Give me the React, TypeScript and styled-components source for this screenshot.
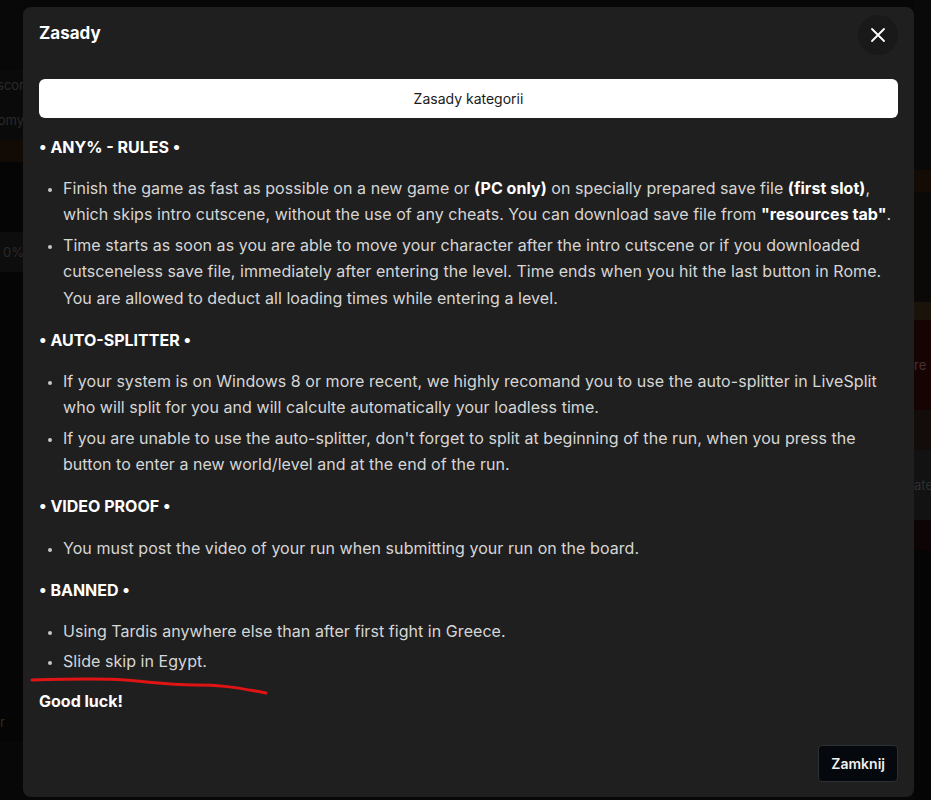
import React from "react";
import styled, { createGlobalStyle } from "styled-components";

const Global = createGlobalStyle`
  html, body { margin: 0; padding: 0; background: #050505; }
  body { font-family: Inter, "Noto Sans", sans-serif; width: 931px; height: 800px; overflow: hidden; }
  * { box-sizing: border-box; }
`;

const Page = styled.div`
  position: relative;
  width: 931px;
  height: 800px;
  display: flex;
  justify-content: space-between;
  background: #070707;
`;

const SideCol = styled.div<{ $w: number }>`
  width: ${(p) => p.$w}px;
  display: flex;
  flex-direction: column;
  overflow: hidden;
`;

const Band = styled.div<{ $h: number; $bg: string; $c?: string; $align?: string }>`
  height: ${(p) => p.$h}px;
  background: ${(p) => p.$bg};
  color: ${(p) => p.$c || "#2a2a2a"};
  font-size: 13px;
  display: flex;
  align-items: center;
  justify-content: ${(p) => p.$align || "flex-end"};
  white-space: nowrap;
  overflow: hidden;
`;

const Overlay = styled.div`
  position: absolute;
  inset: 0;
  padding: 7px 17px 3px 23px;
`;

const Modal = styled.div`
  position: relative;
  height: 790px;
  background: #1f1f1f;
  border-radius: 8px;
  display: flex;
  flex-direction: column;
  color: #d6d6d6;
`;

const Header = styled.div`
  display: flex;
  align-items: center;
  justify-content: space-between;
  padding: 8px 16px 0 16px;
  height: 48px;
`;

const Title = styled.h2`
  margin: 0;
  font-size: 17px;
  font-weight: 700;
  color: #ffffff;
  margin-top: -4px;
`;

const CloseBtn = styled.button`
  width: 40px;
  height: 40px;
  border-radius: 50%;
  border: none;
  background: #191919;
  color: #ffffff;
  display: flex;
  align-items: center;
  justify-content: center;
  padding: 0;
`;

const Body = styled.div`
  flex: 1;
  padding: 24px 16px 0 16px;
  display: flex;
  flex-direction: column;
  gap: 15.5px;
`;

const TabButton = styled.button`
  height: 39px;
  width: 100%;
  background: #ffffff;
  border: none;
  border-radius: 6px;
  font-family: Inter, sans-serif;
  font-size: 14px;
  color: #1a1a1a;
`;

const Heading = styled.p<{ $tight?: boolean }>`
  margin: ${(p) => (p.$tight ? "-2px 0 0" : "0")};
  font-size: 16px;
  line-height: 26px;
  font-weight: 700;
  color: #ffffff;
`;

const List = styled.ul`
  margin: 0;
  padding-left: 24px;
  display: flex;
  flex-direction: column;
  gap: 4px;
`;

const Item = styled.li`
  font-size: 16px;
  line-height: 26.4px;
  letter-spacing: 0.05px;
  color: #d6d6d6;
  &::marker { color: #c8c8c8; font-size: 13px; }
  strong { color: #ffffff; font-weight: 700; }
`;

const Footer = styled.div`
  display: flex;
  justify-content: flex-end;
  padding: 0 16px 15px 16px;
`;

const CloseFooterBtn = styled.button`
  height: 37px;
  padding: 0 12px;
  background: #05080c;
  border: 1px solid #2c2f33;
  border-radius: 4px;
  color: #f0f0f0;
  font-family: Inter, sans-serif;
  font-size: 14px;
  font-weight: 600;
`;

const Scribble = styled.svg`
  position: absolute;
  left: 0;
  top: 0;
  width: 931px;
  height: 800px;
  pointer-events: none;
`;

export default function App() {
  return (
    <>
      <Global />
      <Page>
        <SideCol $w={24}>
          <Band $h={70} $bg="#080808" />
          <Band $h={30} $bg="#0a0a0a">scor</Band>
          <Band $h={40} $bg="#0a0a0a">omy</Band>
          <Band $h={22} $bg="#120b05" />
          <Band $h={70} $bg="#050505" />
          <Band $h={40} $bg="#0d0d0d">0%</Band>
          <Band $h={430} $bg="#050505" />
          <Band $h={40} $bg="#050505" $c="#3a2a0a" $align="flex-start">r</Band>
        </SideCol>
        <SideCol $w={17}>
          <Band $h={170} $bg="#090909" />
          <Band $h={22} $bg="#140c04" />
          <Band $h={110} $bg="#0a0908" />
          <Band $h={18} $bg="#1a130a" />
          <Band $h={90} $bg="#160404" $c="#4a3030" $align="flex-start">re</Band>
          <Band $h={40} $bg="#120d0a" />
          <Band $h={70} $bg="#121212" $c="#2e2e2e" $align="flex-start">ate</Band>
          <Band $h={30} $bg="#0d0505" />
          <Band $h={250} $bg="#050505" />
        </SideCol>
        <Overlay>
          <Modal>
            <Header>
              <Title>Zasady</Title>
              <CloseBtn aria-label="close">
                <svg width="16" height="16" viewBox="0 0 16 16" fill="none" stroke="#fff" strokeWidth="1.8" strokeLinecap="round">
                  <path d="M2 2L14 14M14 2L2 14" />
                </svg>
              </CloseBtn>
            </Header>
            <Body>
              <TabButton>Zasady kategorii</TabButton>
              <Heading>• ANY% - RULES •</Heading>
              <List>
                <Item>
                  Finish the game as fast as possible on a new game or <strong>(PC only)</strong> on specially prepared save file <strong>(first slot)</strong>, which skips intro cutscene, without the use of any cheats. You can download save file from <strong>"resources tab"</strong>.
                </Item>
                <Item>
                  Time starts as soon as you are able to move your character after the intro cutscene or if you downloaded cutsceneless save file, immediately after entering the level. Time ends when you hit the last button in Rome. You are allowed to deduct all loading times while entering a level.
                </Item>
              </List>
              <Heading>• AUTO-SPLITTER •</Heading>
              <List>
                <Item>
                  If your system is on Windows 8 or more recent, we highly recomand you to use the auto-splitter in LiveSplit who will split for you and will calculte automatically your loadless time.
                </Item>
                <Item>
                  If you are unable to use the auto-splitter, don't forget to split at beginning of the run, when you press the button to enter a new world/level and at the end of the run.
                </Item>
              </List>
              <Heading>• VIDEO PROOF •</Heading>
              <List>
                <Item>You must post the video of your run when submitting your run on the board.</Item>
              </List>
              <Heading>• BANNED •</Heading>
              <List>
                <Item>Using Tardis anywhere else than after first fight in Greece.</Item>
                <Item>Slide skip in Egypt.</Item>
              </List>
              <Heading $tight>Good luck!</Heading>
            </Body>
            <Footer>
              <CloseFooterBtn>Zamknij</CloseFooterBtn>
            </Footer>
          </Modal>
        </Overlay>
        <Scribble viewBox="0 0 931 800">
          <path
            d="M32 680 C 70 679, 110 679, 125 680 C 150 682, 170 685, 195 685 C 215 685, 230 686, 266 693"
            stroke="#e01414"
            strokeWidth="3"
            fill="none"
            strokeLinecap="round"
          />
        </Scribble>
      </Page>
    </>
  );
}
